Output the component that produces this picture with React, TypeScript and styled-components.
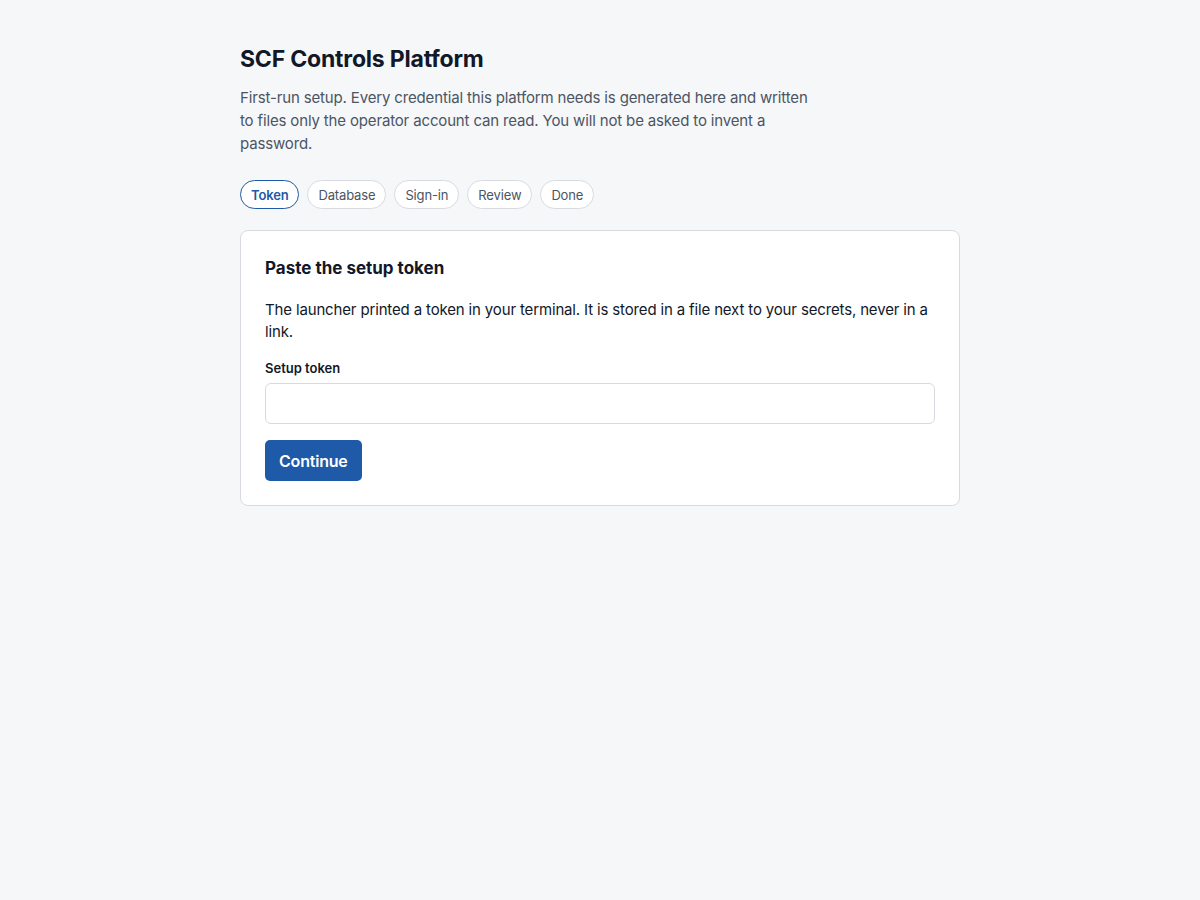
import React from "react";
import styled, { createGlobalStyle } from "styled-components";

const GlobalStyle = createGlobalStyle`
  * {
    box-sizing: border-box;
  }
  html, body {
    margin: 0;
    padding: 0;
    background: #f6f7f9;
    font-family: "Inter", "Liberation Sans", sans-serif;
    color: #111827;
  }
`;

const Page = styled.main`
  width: 720px;
  margin: 0 auto;
  padding-top: 44px;
`;

const Title = styled.h1`
  margin: 0 0 12px;
  font-size: 23px;
  font-weight: 700;
  line-height: 30px;
  letter-spacing: -0.2px;
  color: #111827;
`;

const Intro = styled.p`
  margin: 0 0 25px;
  max-width: 573px;
  font-size: 15px;
  line-height: 23px;
  letter-spacing: -0.15px;
  color: #4b5563;
`;

const Steps = styled.ol`
  display: flex;
  gap: 8px;
  list-style: none;
  margin: 0 0 21px;
  padding: 0;
`;

const Step = styled.li<{ $active?: boolean }>`
  height: 29px;
  padding: 0 10px;
  display: flex;
  align-items: center;
  border-radius: 15px;
  font-size: 13px;
  letter-spacing: -0.15px;
  font-weight: ${(p) => (p.$active ? 600 : 400)};
  color: ${(p) => (p.$active ? "#1e5aa8" : "#4b5563")};
  background: #fff;
  border: 1px solid ${(p) => (p.$active ? "#1e5aa8" : "#d7dbe0")};
`;

const Card = styled.section`
  background: #fff;
  border: 1px solid #d7dbe0;
  border-radius: 8px;
  padding: 25px 24px 24px;
`;

const CardTitle = styled.h2`
  margin: 0 0 19px;
  font-size: 17px;
  font-weight: 700;
  line-height: 24px;
  color: #111827;
`;

const CardText = styled.p`
  margin: 0 0 16px;
  font-size: 15px;
  line-height: 22px;
  letter-spacing: -0.15px;
  color: #111827;
`;

const Label = styled.label`
  display: block;
  margin-bottom: 6px;
  font-size: 13px;
  font-weight: 600;
  line-height: 18px;
  color: #111827;
`;

const Input = styled.input`
  display: block;
  width: 100%;
  height: 41px;
  padding: 0 12px;
  border: 1px solid #d7dbe0;
  border-radius: 6px;
  font-family: inherit;
  font-size: 15px;
  background: #fff;
  margin-bottom: 16px;
`;

const Button = styled.button`
  height: 41px;
  padding: 0 14px;
  border: none;
  border-radius: 5px;
  background: #1e5aa8;
  color: #fff;
  font-family: inherit;
  font-size: 16px;
  font-weight: 600;
  letter-spacing: -0.2px;
  cursor: pointer;
`;

const steps = ["Token", "Database", "Sign-in", "Review", "Done"];

export default function App() {
  return (
    <>
      <GlobalStyle />
      <Page>
        <Title>SCF Controls Platform</Title>
        <Intro>
          First-run setup. Every credential this platform needs is generated
          here and written to files only the operator account can read. You
          will not be asked to invent a password.
        </Intro>
        <Steps>
          {steps.map((s, i) => (
            <Step key={s} $active={i === 0}>
              {s}
            </Step>
          ))}
        </Steps>
        <Card>
          <CardTitle>Paste the setup token</CardTitle>
          <CardText>
            The launcher printed a token in your terminal. It is stored in a
            file next to your secrets, never in a link.
          </CardText>
          <Label htmlFor="token">Setup token</Label>
          <Input id="token" type="text" />
          <Button type="button">Continue</Button>
        </Card>
      </Page>
    </>
  );
}
